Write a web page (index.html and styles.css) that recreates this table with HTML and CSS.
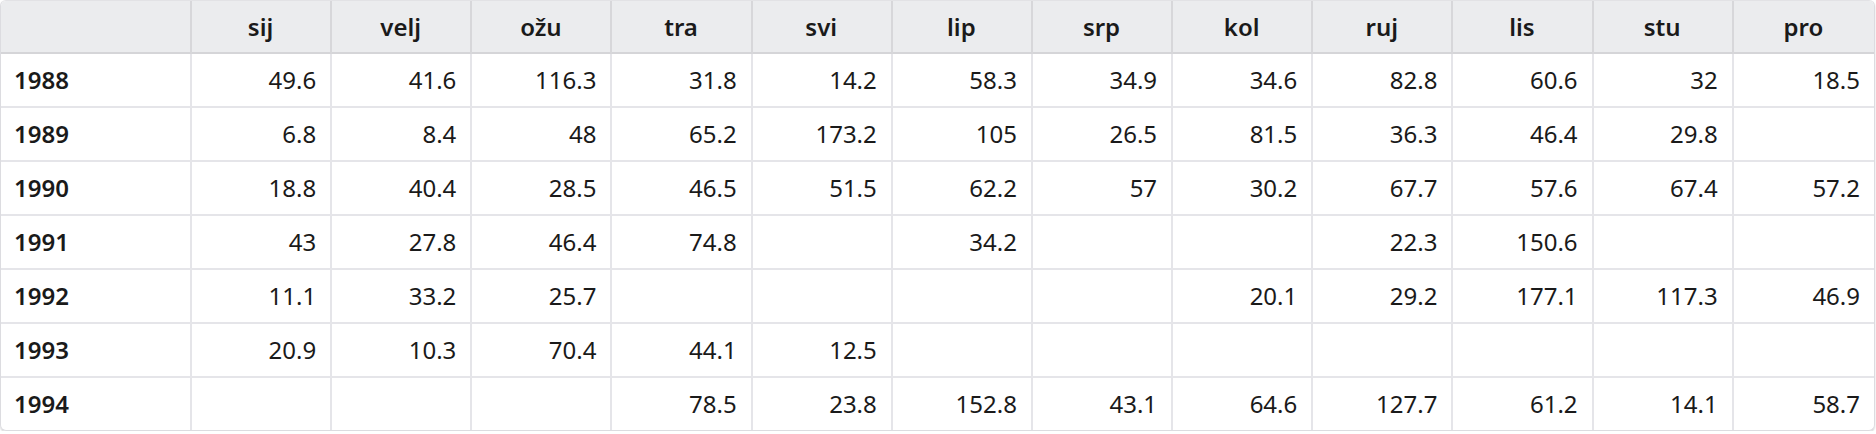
FILE: index.html
```html
<!DOCTYPE html>
<html lang="hr">
<head>
<meta charset="utf-8">
<title>Tablica</title>
<link rel="stylesheet" href="styles.css">
</head>
<body>
<div class="table-wrap">
<table class="data">
<colgroup><col class="col-year"><col span="12"></colgroup>
<thead>
<tr><th></th><th>sij</th><th>velj</th><th>ožu</th><th>tra</th><th>svi</th><th>lip</th><th>srp</th><th>kol</th><th>ruj</th><th>lis</th><th>stu</th><th>pro</th></tr>
</thead>
<tbody>
<tr><th>1988</th><td>49.6</td><td>41.6</td><td>116.3</td><td>31.8</td><td>14.2</td><td>58.3</td><td>34.9</td><td>34.6</td><td>82.8</td><td>60.6</td><td>32</td><td>18.5</td></tr>
<tr><th>1989</th><td>6.8</td><td>8.4</td><td>48</td><td>65.2</td><td>173.2</td><td>105</td><td>26.5</td><td>81.5</td><td>36.3</td><td>46.4</td><td>29.8</td><td></td></tr>
<tr><th>1990</th><td>18.8</td><td>40.4</td><td>28.5</td><td>46.5</td><td>51.5</td><td>62.2</td><td>57</td><td>30.2</td><td>67.7</td><td>57.6</td><td>67.4</td><td>57.2</td></tr>
<tr><th>1991</th><td>43</td><td>27.8</td><td>46.4</td><td>74.8</td><td></td><td>34.2</td><td></td><td></td><td>22.3</td><td>150.6</td><td></td><td></td></tr>
<tr><th>1992</th><td>11.1</td><td>33.2</td><td>25.7</td><td></td><td></td><td></td><td></td><td>20.1</td><td>29.2</td><td>177.1</td><td>117.3</td><td>46.9</td></tr>
<tr><th>1993</th><td>20.9</td><td>10.3</td><td>70.4</td><td>44.1</td><td>12.5</td><td></td><td></td><td></td><td></td><td></td><td></td><td></td></tr>
<tr><th>1994</th><td></td><td></td><td></td><td>78.5</td><td>23.8</td><td>152.8</td><td>43.1</td><td>64.6</td><td>127.7</td><td>61.2</td><td>14.1</td><td>58.7</td></tr>
</tbody>
</table>
</div>
</body>
</html>
```
FILE: styles.css
```css
html, body {
  margin: 0;
  padding: 0;
  background: #ffffff;
}
body {
  font-family: "Noto Sans", "Open Sans", "Liberation Sans", sans-serif;
  font-size: 24px;
  color: #1a1a1a;
}
.table-wrap {
  width: 1873px;
  border: 1px solid #dcdce0;
  border-top-color: #e2e2e5;
  border-radius: 6px;
  overflow: hidden;
  box-shadow: 0 1px 2px rgba(0, 0, 0, 0.18);
}
.data {
  width: 100%;
  table-layout: fixed;
  border-collapse: separate;
  border-spacing: 0;
}
.col-year {
  width: 191px;
}
.data th,
.data td {
  height: 52px;
  padding: 0 14px 0 13px;
  border-right: 2px solid #e5e5e9;
  border-bottom: 2px solid #e5e5e9;
  box-sizing: content-box;
  line-height: 1;
  white-space: nowrap;
}
.data td {
  text-align: right;
  font-weight: 400;
}
.data tbody th {
  text-align: left;
  font-weight: 600;
}
.data thead th {
  height: 51px;
  background: #ebecee;
  text-align: center;
  font-weight: 600;
  border-right-color: #d7d7da;
  border-bottom-color: #d5d5d8;
}
.data tr > :last-child {
  border-right: none;
}
.data tbody tr:last-child > * {
  border-bottom: none;
}
```
